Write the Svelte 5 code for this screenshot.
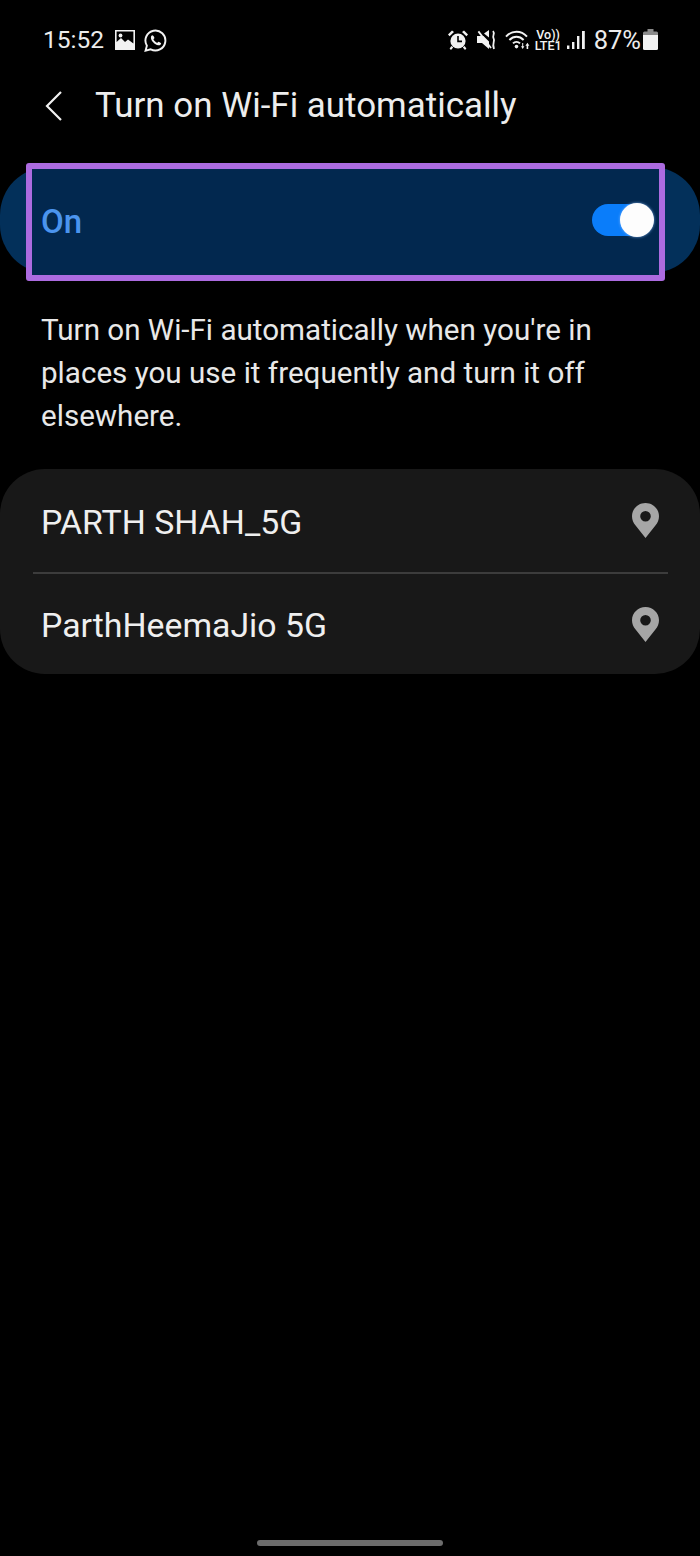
<script>
	const networks = ['PARTH SHAH_5G', 'ParthHeemaJio 5G'];
</script>

<div class="screen">
	<div class="status">
		<div class="status-left">
			<span class="time">15:52</span>
			<!-- gallery notification -->
			<svg class="ic-image" viewBox="0 0 20 20" width="20" height="20">
				<path fill="#f2f2f2" fill-rule="evenodd" d="M0 0H20V20H0ZM1.6 1.6V12L6 8l4 4 3-2.5 5.4 4V1.6Z" />
				<circle cx="5.5" cy="5.5" r="1.9" fill="#f2f2f2" />
			</svg>
			<!-- whatsapp -->
			<svg class="ic-wa" viewBox="0 0 24 24" width="23" height="23">
				<path fill="none" stroke="#f2f2f2" stroke-width="2" d="M1.6 22.6 3 17.4A10.4 10.4 0 1 1 7 21.2Z" />
				<path fill="#f2f2f2" d="M8.8 6.6c-.5 0-1.6.8-1.6 2.6 0 2.8 3.8 7.4 7.8 7.8 1.8.1 2.9-1.2 2.9-2.2 0-.4-2.4-1.7-2.8-1.6-.4.1-.9 1.2-1.3 1.2-1 0-3.5-2.2-3.9-3.4 0-.4 1-1 1-1.5 0-.4-1-2.9-2.1-2.9Z" />
			</svg>
		</div>
		<div class="status-right">
			<!-- alarm -->
			<svg class="ic-alarm" viewBox="0 0 20 20" width="20" height="20">
				<circle cx="10" cy="11" r="7.6" fill="#f2f2f2" />
				<path fill="none" stroke="#000" stroke-width="1.6" d="M10 6v5.4h4" />
				<path fill="#f2f2f2" d="M0 4.4 4 .4l2 1.6-4.4 4.2ZM20 4.4 16 .4l-2 1.6 4.4 4.2ZM3.4 16l1.8 1.4L3 20l-1.4-1.4ZM16.6 16l-1.8 1.4L17 20l1.4-1.4Z" />
			</svg>
			<!-- muted speaker -->
			<svg class="ic-mute" viewBox="0 0 21 20" width="21" height="20">
				<path fill="#f2f2f2" d="M0 6h4l2.4 0L12 11.4V19L5 13H0ZM7 3.4 12 0v7.6Z" />
				<path fill="none" stroke="#f2f2f2" stroke-width="1.8" d="M1.4 1.4 14 18" />
				<path fill="none" stroke="#f2f2f2" stroke-width="1.8" d="M16 1c2.6 3-1.2 4.6.6 7.4 1.8 3-2 4.6.4 10.6" />
			</svg>
			<!-- wifi with activity arrows -->
			<svg class="ic-wifi" viewBox="0 0 26 20" width="26" height="20">
				<g fill="none" stroke="#f2f2f2" stroke-width="2">
					<path d="M1 6.6c6-6.400 15-6.400 21 0" />
					<path d="M4.400 10c4.200-4.200 10-4.200 14.200 0" />
					<path d="M8 13.400c2-2 5-2 7 0" />
				</g>
				<circle cx="11.500" cy="16.600" r="1.800" fill="#f2f2f2" />
				<path fill="#f2f2f2" d="M16 16.200h1.200V13h1v3.200h1.200L17.700 19ZM21.600 15.800h-1.200l2-3 2 3h-1.200V19h-1.600Z" />
			</svg>
			<span class="volte"><span>Vo))</span><span>LTE1</span></span>
			<!-- signal bars -->
			<svg class="ic-signal" viewBox="0 0 18 18" width="18" height="18">
				<path fill="#f2f2f2" d="M0 14.500h2.400V18H0ZM5 11h2.400v7H5ZM10 5h2.400v13H10ZM15 0h2.800v18H15Z" />
			</svg>
			<span class="battery-pct">87%</span>
			<svg class="ic-battery" viewBox="0 0 15 21" width="15" height="21">
				<path fill="#8a8a8a" d="M4.500 0h6v2.500h3a1.500 1.500 0 0 1 1.500 1.500v3H0V4a1.500 1.500 0 0 1 1.500-1.500h3Z" />
				<path fill="#f2f2f2" d="M0 6h15v13.500a1.500 1.500 0 0 1-1.500 1.500h-12A1.500 1.500 0 0 1 0 19.500Z" />
			</svg>
		</div>
	</div>

	<header class="title-bar">
		<svg class="back" viewBox="0 0 18 32" width="18" height="32">
			<path fill="none" stroke="#f0f0f0" stroke-width="2.200" d="M17 2 3 16l14 14" />
		</svg>
		<h1>Turn on Wi-Fi automatically</h1>
	</header>

	<div class="switch-card">
		<span class="switch-label">On</span>
		<span class="toggle"><span class="thumb"></span></span>
		<div class="highlight"></div>
	</div>

	<p class="desc">
		Turn on Wi-Fi automatically when you're in<br />
		places you use it frequently and turn it off<br />
		elsewhere.
	</p>

	<div class="list">
		{#each networks as name, i}
			{#if i > 0}<div class="divider"></div>{/if}
			<div class="row">
				<span class="name">{name}</span>
				<svg class="pin" viewBox="0 0 27 35" width="27" height="35">
					<path fill="#a6a6a6" fill-rule="evenodd" d="M13.500 0C6 0 0 6 0 13.200c0 3.600 1.300 6.600 3.600 9.300L13.500 35l9.900-12.500c2.300-2.700 3.600-5.700 3.600-9.300C27 6 21 0 13.500 0ZM13.500 8a5.300 5.300 0 1 1 0 10.600 5.300 5.300 0 0 1 0-10.600Z" />
				</svg>
			</div>
		{/each}
	</div>

	<div class="home-indicator"></div>
</div>

<style>
	:global(body) {
		background: #000;
	}

	.screen {
		position: relative;
		display: flex;
		flex-direction: column;
		height: 1556px;
		overflow: hidden;
		background: #000;
		color: #f2f2f2;
		font-family: Roboto, "Liberation Sans", sans-serif;
	}

	.status {
		display: flex;
		justify-content: space-between;
		align-items: center;
		height: 24px;
		margin-top: 28px;
		padding: 0 42px 0 43px;
	}

	.status-left,
	.status-right {
		display: flex;
		align-items: center;
	}

	.time {
		font-size: 24.5px;
		line-height: 24px;
		color: #ececec;
	}

	.ic-image {
		margin-left: 11px;
	}

	.ic-wa {
		margin-left: 9px;
	}

	.ic-mute {
		margin-left: 9px;
	}

	.ic-wifi {
		margin-left: 7px;
	}

	.volte {
		display: flex;
		flex-direction: column;
		align-items: center;
		margin-left: 4px;
		font-size: 12.5px;
		line-height: 11px;
		font-weight: 500;
	}

	.ic-signal {
		margin-left: 5px;
	}

	.battery-pct {
		margin-left: 9px;
		font-size: 25.5px;
		line-height: 24px;
		color: #ececec;
	}

	.ic-battery {
		margin-left: 2px;
		margin-top: -2px;
	}

	.title-bar {
		display: flex;
		align-items: center;
		height: 44px;
		margin-top: 32px;
		padding-left: 44px;
	}

	.back {
		flex: none;
	}

	h1 {
		margin: 0 0 0 33px;
		font-size: 34.95px;
		line-height: 44px;
		font-weight: 400;
		white-space: nowrap;
		color: #ededed;
	}

	.switch-card {
		position: relative;
		display: flex;
		justify-content: space-between;
		align-items: center;
		height: 106px;
		margin-top: 39px;
		padding: 0 49px 0 41px;
		border-radius: 48px;
		background: #03305a;
	}

	.switch-label {
		position: relative;
		z-index: 1;
		margin-top: 2px;
		font-size: 33px;
		font-weight: 500;
		color: #4b94ee;
	}

	.toggle {
		position: relative;
		z-index: 1;
		width: 59px;
		height: 32px;
		border-radius: 16px;
		background: #0a7dfa;
	}

	.thumb {
		position: absolute;
		top: -1px;
		right: -3px;
		width: 34px;
		height: 34px;
		border-radius: 50%;
		background: #fdfdfd;
		box-shadow: 0 0 3px rgba(140, 190, 255, 0.8);
	}

	/* purple box drawn over the switch row */
	.highlight {
		position: absolute;
		left: 26px;
		top: -4px;
		width: 639px;
		height: 118px;
		box-sizing: border-box;
		border: 6px solid #ac6be0;
		border-radius: 3px;
		background: #02284f;
	}

	.desc {
		margin: 36px 0 0 41px;
		font-size: 29.6px;
		line-height: 43px;
		white-space: nowrap;
		color: #e8e8e8;
	}

	.list {
		display: grid;
		grid-template-rows: 103px 2px 100px;
		margin-top: 31px;
		border-radius: 45px;
		background: #181818;
	}

	.row {
		display: flex;
		justify-content: space-between;
		align-items: center;
		padding: 0 41px;
	}

	.name {
		margin-top: 3px;
		font-size: 33.8px;
		color: #efefef;
	}

	.divider {
		margin: 0 32px 0 33px;
		background: #3c3c3c;
	}

	.home-indicator {
		position: absolute;
		left: 257px;
		bottom: 10px;
		width: 186px;
		height: 6px;
		border-radius: 3px;
		background: #6c6c6c;
	}
</style>
